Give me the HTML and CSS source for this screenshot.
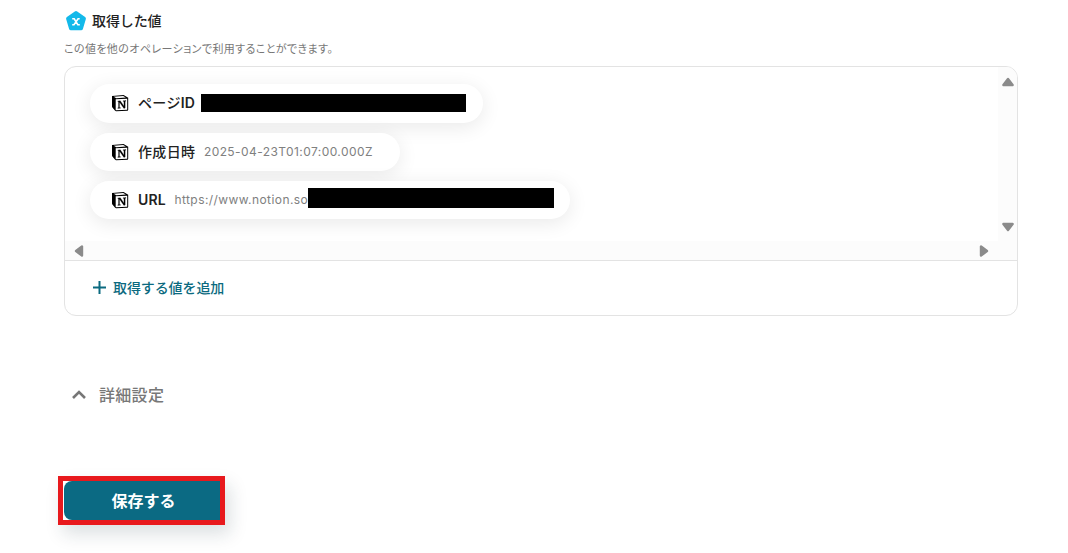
FILE: index.html
```html
<!DOCTYPE html>
<html lang="ja">
<head>
  <meta charset="UTF-8">
  <meta name="viewport" content="width=device-width, initial-scale=1.0">
  <title>取得した値</title>
  <link rel="stylesheet" href="styles.css">
</head>
<body>
  <svg class="sprite" width="0" height="0">
    <symbol id="notion" viewBox="0 0 18 18">
      <path d="M1 2 L12.6 1 L17.2 3.8 V15.8 Q17.2 16.6 16.4 16.7 L5.2 17.3 Q4.4 17.3 3.9 16.6 L1.4 13.5 Q1 13 1 12.3 Z" fill="#000"/>
      <path d="M2.8 2.7 L12.2 1.9 L14.8 3.5 L5.2 4.2 Z" fill="#fff"/>
      <path d="M4.7 5.3 L16.2 4.7 V15.7 L4.7 16.3 Z" fill="#fff"/>
      <path d="M6.8 6.9 L9.3 6.7 L12.9 11.9 V7.6 L12 7.3 V6.7 L15 6.5 V7.1 L14.2 7.4 V14.1 L12.9 14.4 L8.5 8.2 V13.4 L9.6 13.7 V14.2 L6.8 14.4 V13.8 L7.5 13.5 V7.8 L6.8 7.5 Z" fill="#000" stroke="#000" stroke-width=".2"/>
    </symbol>
  </svg>

  <main class="page">
    <div class="heading">
      <svg class="heading-icon" viewBox="0 0 20 20">
        <path d="M8.8 .5 Q10 -.3 11.2 .5 L19.1 6.1 Q20.2 7 19.8 8.2 L16.9 17.9 Q16.5 19.2 15.1 19.2 H4.9 Q3.5 19.2 3.1 17.9 L.2 8.2 Q-.2 7 .9 6.1 Z" fill="#13b9ea"/>
        <path d="M6.2 7.8 H8.2 L11.8 13.7 H13.8 M13.7 7.8 H12.1 L8 13.7 H6.2" fill="none" stroke="#fff" stroke-width="1.6"/>
      </svg>
      <h2>取得した値</h2>
    </div>
    <p class="note">この値を他のオペレーションで利用することができます。</p>

    <section class="box">
      <div class="scroll">
        <div class="values">
          <div class="pill pill-page">
            <svg class="notion"><use href="#notion"/></svg>
            <span class="name">ページ<b>ID</b></span>
            <span class="mask mask-page"></span>
          </div>
          <div class="pill pill-date">
            <svg class="notion"><use href="#notion"/></svg>
            <span class="name">作成日時</span>
            <span class="value">2025-04-23T01:07:00.000Z</span>
          </div>
          <div class="pill pill-url">
            <svg class="notion"><use href="#notion"/></svg>
            <span class="name"><b>URL</b></span>
            <span class="value">https://www.notion.so</span>
            <span class="mask mask-url"></span>
          </div>
        </div>
        <div class="bar-y">
          <svg width="12" height="10" viewBox="0 0 12 10"><path d="M6 2 L10.6 8 H1.4 Z"/></svg>
          <svg width="12" height="10" viewBox="0 0 12 10"><path d="M6 8 L10.6 2 H1.4 Z"/></svg>
        </div>
        <div class="bar-x">
          <svg width="10" height="12" viewBox="0 0 10 12"><path d="M2 6 L8 1.4 V10.6 Z"/></svg>
          <svg width="10" height="12" viewBox="0 0 10 12"><path d="M8 6 L2 1.4 V10.6 Z"/></svg>
        </div>
      </div>
      <div class="add">
        <svg width="13" height="13" viewBox="0 0 13 13"><path d="M6.5 0 V13 M0 6.5 H13"/></svg>
        <span>取得する値を追加</span>
      </div>
    </section>

    <div class="details">
      <svg width="14" height="9" viewBox="0 0 14 9"><path d="M1 8 L7 2 L13 8"/></svg>
      <span>詳細設定</span>
    </div>

    <div class="save-frame">
      <button class="save" type="button">保存する</button>
    </div>
  </main>
</body>
</html>
```
FILE: styles.css
```css
* {
  box-sizing: border-box;
}

body {
  height: 100vh;
  margin: 0;
  background: #fff;
  color: #222;
  font-family: Inter, "Noto Sans CJK JP", sans-serif;
  overflow: hidden;
}

.sprite {
  display: block;
}

.page {
  width: 954px;
  margin-left: 64px;
  padding-top: 10px;
}

.heading {
  display: flex;
  align-items: center;
  gap: 6px;
  height: 22px;
  padding-left: 2px;
}

.heading-icon {
  width: 20px;
  height: 20px;
}

h2 {
  margin: 0;
  padding-bottom: 1px;
  font-size: 14px;
  line-height: 20px;
  font-weight: 500;
  letter-spacing: -0.1px;
}

.note {
  margin: 9px 0 8px;
  color: #777;
  font-size: 11px;
  line-height: 17px;
  letter-spacing: 0.4px;
  font-feature-settings: "palt";
}

.box {
  height: 250px;
  border: 1px solid #e3e3e3;
  border-radius: 12px;
  overflow: hidden;
}

.scroll {
  display: grid;
  grid-template-columns: 1fr 19px;
  grid-template-rows: 174px 19px;
  border-bottom: 1px solid #e3e3e3;
}

.values {
  display: flex;
  flex-direction: column;
  align-items: flex-start;
  padding: 17px 0 0 25px;
  overflow: hidden;
}

.pill {
  display: flex;
  align-items: center;
  height: 38px;
  margin-bottom: 10px;
  padding-left: 21px;
  border-radius: 20px;
  background: #fff;
  box-shadow: 0 4px 20px rgba(0, 0, 0, 0.09);
  white-space: nowrap;
}

.pill-page {
  width: 393px;
  height: 39px;
}

.pill-date {
  width: 310px;
}

.pill-url {
  width: 480px;
}

.notion {
  flex: none;
  width: 18px;
  height: 18px;
  margin: 0 9px 1px 0;
}

.name {
  padding-bottom: 2px;
  font-size: 14px;
  font-weight: 500;
  letter-spacing: 0.35px;
}

.pill-page .name {
  padding-bottom: 3px;
}

.name b {
  font-weight: 600;
  letter-spacing: 0.2px;
}

.value {
  margin-left: 8.5px;
  padding-bottom: 2px;
  color: #808080;
  font-size: 12px;
  letter-spacing: 0.42px;
}

.mask {
  flex: none;
  background: #000;
}

.mask-page {
  width: 265px;
  height: 18px;
  margin: 0 0 2px 6px;
}

.mask-url {
  width: 246px;
  height: 20px;
  margin: 0 0 4px;
}

.bar-y,
.bar-x {
  display: flex;
  justify-content: space-between;
  background: #fcfcfc;
  fill: #8b8b8b;
  stroke: #8b8b8b;
  stroke-width: 2.4;
  stroke-linejoin: round;
}

.bar-y {
  flex-direction: column;
  align-items: center;
  padding: 10px 0 9px;
}

.bar-x {
  grid-column: 1 / -1;
  align-items: center;
  padding: 0 28px 0 9px;
}

.add {
  display: flex;
  align-items: center;
  gap: 7px;
  height: 52px;
  padding-left: 28px;
  color: #0b6a80;
  font-size: 14px;
  font-weight: 500;
  letter-spacing: -0.1px;
}

.add path {
  stroke: #0b6a80;
  stroke-width: 2;
}

.details {
  display: flex;
  align-items: center;
  gap: 13px;
  height: 30px;
  margin-top: 63px;
  padding-left: 8px;
  color: #777;
  font-size: 16px;
  font-weight: 500;
  letter-spacing: 0.3px;
}

.details path {
  fill: none;
  stroke: #777;
  stroke-width: 2.6;
}

.save-frame {
  width: 167px;
  height: 49px;
  margin: 67px 0 0 -6px;
  border: 5px solid #e8191d;
  box-shadow: 5px 9px 18px rgba(20, 50, 60, 0.15);
}

.save {
  display: block;
  width: 156px;
  height: 39px;
  margin-left: 1px;
  padding: 0 0 2px 3px;
  border: 0;
  border-radius: 8px 0 0 8px;
  background: #0b6a83;
  color: #fff;
  font-family: inherit;
  font-size: 16px;
  font-weight: 700;
}
```
